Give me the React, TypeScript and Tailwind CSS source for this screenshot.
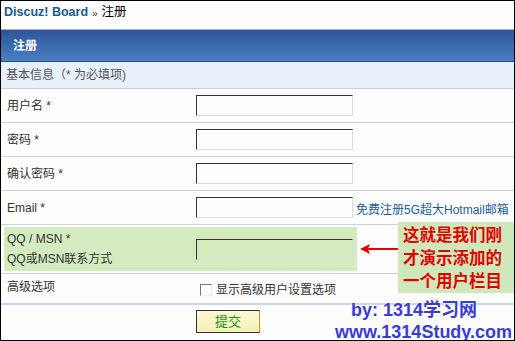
import React from 'react';

const cjk = "font-['Liberation_Sans','Noto_Sans_CJK_SC',sans-serif]";

const TextInput: React.FC<{ dark?: boolean }> = ({ dark }) => (
  <div
    className={`w-[157px] h-[21px] border border-t-[#333] border-l-[#333] border-r-[#ddd] border-b-[#e4d8dc] ${
      dark ? 'border-t-[#1c2c48] border-l-[#1c2c48] bg-[#d3ebbf]' : 'bg-[#fdfefd]'
    }`}
  />
);

const rows = [
  { label: '用户名 *' },
  { label: '密码 *' },
  { label: '确认密码 *' },
  { label: 'Email *', link: '免费注册5G超大Hotmail邮箱' },
];

const App: React.FC = () => {
  return (
    <div className={`relative w-[515px] h-[341px] overflow-hidden border border-black bg-[#fcfdfc] text-[12px] text-[#333] ${cjk}`}>
      {/* Breadcrumb */}
      <div className="h-[28px] flex items-start pt-[2px] pl-[3px] gap-[4px]">
        <span className="font-bold text-[12.5px] text-[#1a5a8c]">Discuz! Board</span>
        <span className="text-[10px] mt-[3px]">»</span>
        <span className="text-[12.5px] text-black">注册</span>
      </div>

      {/* Header bar */}
      <div className="h-[33px] border-t border-t-[#9fb2c8] bg-gradient-to-b from-[#2c5599] to-[#4a7fc1] border-b border-b-[#2a4f86] flex items-center pl-[12px]">
        <span className="text-white font-bold text-[12px]">注册</span>
      </div>

      {/* Section label */}
      <div className="h-[27px] bg-[#e8f0f9] border-b border-[#c6d0dc] flex items-center pl-[5px] text-[#555]">
        基本信息（* 为必填项)
      </div>

      {rows.map((row) => (
        <div key={row.label} className="h-[34px] border-b border-[#c9d3df] flex items-center">
          <div className="w-[195px] pl-[6px]">{row.label}</div>
          <TextInput />
          {row.link && <span className="ml-[3px] mt-[5px] text-[#1d5e98] whitespace-nowrap">{row.link}</span>}
        </div>
      ))}

      {/* QQ / MSN highlighted row */}
      <div className="h-[49px] border-b border-[#c9d3df] flex items-center pl-[3px]">
        <div className="w-[353px] h-[44px] bg-[#d3ebbf] flex items-center">
          <div className="w-[192px] pl-[3px] leading-[20px]">
            <div>QQ / MSN *</div>
            <div>QQ或MSN联系方式</div>
          </div>
          <TextInput dark />
        </div>
      </div>

      {/* Advanced */}
      <div className="h-[31px] border-b-2 border-[#cbd5e6] flex items-center">
        <div className="w-[199px] pl-[6px] -mt-[4px]">高级选项</div>
        <div className="flex items-center gap-[4px] mt-[2px]">
          <div className="w-[12px] h-[12px] border border-t-[#777] border-l-[#777] border-r-[#eee] border-b-[#eee] bg-white" />
          <span>显示高级用户设置选项</span>
        </div>
      </div>

      {/* Submit */}
      <div className="pl-[195px] pt-[5px]">
        <button className="w-[64px] h-[23px] bg-gradient-to-b from-[#fdf8d4] to-[#f8efb8] border border-[#333] border-r-[#c58a2a] text-[#129412] text-[13px]">
          提交
        </button>
      </div>

      {/* Annotation box */}
      <div className="absolute left-[397px] top-[221px] w-[117px] h-[71px] bg-[#cfe8b9] pl-[5px] pt-[2px] text-[#e10000] font-bold text-[16.5px] leading-[23px]">
        <div>这就是我们刚</div>
        <div>才演示添加的</div>
        <div>一个用户栏目</div>
      </div>

      {/* Arrow */}
      <svg className="absolute left-[358px] top-[241px]" width="40" height="14" viewBox="0 0 40 14">
        <line x1="8" y1="7" x2="39" y2="7" stroke="#e60000" strokeWidth="2" />
        <path d="M1 7 L11 2 L9 7 L11 12 Z" fill="#e60000" />
      </svg>

      {/* Watermark */}
      <div
        className="absolute left-[350px] top-[298px] font-bold text-[18px] leading-[22px] text-[#3a3ad6] font-['Liberation_Sans','Noto_Sans_CJK_SC',sans-serif] whitespace-nowrap [text-shadow:0_0_2px_#fff,0_0_2px_#fff]"
      >
        by: 1314学习网
      </div>
      <div className="absolute left-[334px] top-[320px] font-bold text-[18px] leading-[22px] text-[#3a3ad6] whitespace-nowrap [text-shadow:0_0_2px_#fff,0_0_2px_#fff]">
        www.1314Study.com
      </div>
    </div>
  );
};

export default App;
